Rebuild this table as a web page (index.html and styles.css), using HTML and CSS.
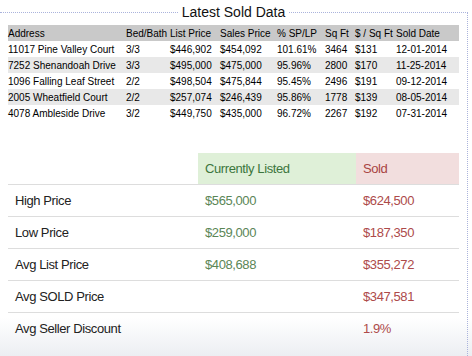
FILE: index.html
```html
<!DOCTYPE html>
<html>
<head>
<meta charset="utf-8">
<link rel="stylesheet" href="styles.css">
</head>
<body>
<fieldset class="panel">
  <legend class="panel-title">Latest Sold Data</legend>
  <table class="sold">
    <colgroup>
      <col class="c-addr"><col class="c-bb"><col class="c-lp"><col class="c-sp"><col class="c-pct"><col class="c-sq"><col class="c-psf"><col class="c-date">
    </colgroup>
    <thead>
      <tr><th>Address</th><th>Bed/Bath</th><th>List Price</th><th>Sales Price</th><th>% SP/LP</th><th>Sq Ft</th><th>$ / Sq Ft</th><th>Sold Date</th></tr>
    </thead>
    <tbody>
      <tr><td>11017 Pine Valley Court</td><td>3/3</td><td>$446,902</td><td>$454,092</td><td>101.61%</td><td>3464</td><td>$131</td><td>12-01-2014</td></tr>
      <tr><td>7252 Shenandoah Drive</td><td>3/3</td><td>$495,000</td><td>$475,000</td><td>95.96%</td><td>2800</td><td>$170</td><td>11-25-2014</td></tr>
      <tr><td>1096 Falling Leaf Street</td><td>2/2</td><td>$498,504</td><td>$475,844</td><td>95.45%</td><td>2496</td><td>$191</td><td>09-12-2014</td></tr>
      <tr><td>2005 Wheatfield Court</td><td>2/2</td><td>$257,074</td><td>$246,439</td><td>95.86%</td><td>1778</td><td>$139</td><td>08-05-2014</td></tr>
      <tr><td>4078 Ambleside Drive</td><td>3/2</td><td>$449,750</td><td>$435,000</td><td>96.72%</td><td>2267</td><td>$192</td><td>07-31-2014</td></tr>
    </tbody>
  </table>

  <table class="stats">
    <colgroup><col class="s-label"><col class="s-cur"><col class="s-sold"></colgroup>
    <thead>
      <tr><th></th><th class="h-cur">Currently Listed</th><th class="h-sold">Sold</th></tr>
    </thead>
    <tbody>
      <tr><td>High Price</td><td class="v-cur">$565,000</td><td class="v-sold">$624,500</td></tr>
      <tr><td>Low Price</td><td class="v-cur">$259,000</td><td class="v-sold">$187,350</td></tr>
      <tr><td>Avg List Price</td><td class="v-cur">$408,688</td><td class="v-sold">$355,272</td></tr>
      <tr><td>Avg SOLD Price</td><td class="v-cur"></td><td class="v-sold">$347,581</td></tr>
      <tr><td>Avg Seller Discount</td><td class="v-cur"></td><td class="v-sold">1.9%</td></tr>
    </tbody>
  </table>
</fieldset>
</body>
</html>
```

FILE: styles.css
```css
html, body {
  margin: 0;
  padding: 0;
}
body {
  width: 472px;
  height: 356px;
  overflow: hidden;
  font-family: "Liberation Sans", Arial, sans-serif;
  background: linear-gradient(to bottom, #ffffff 0, #ffffff 318px, #eceef2 356px);
}
.panel {
  box-sizing: border-box;
  margin: 4px 4px 0 0;
  padding: 4px 8px 0 8px;
  border: 1px dotted #aab3dc;
  border-left: none;
  border-bottom: none;
  min-width: 0;
  height: 352px;
}
.panel-title {
  margin: 0 auto;
  padding: 0 3px;
  font-size: 14px;
  line-height: 17px;
  color: #111;
}
.sold {
  width: 451px;
  table-layout: fixed;
  border-collapse: collapse;
  font-size: 10px;
  color: #000;
}
.sold th, .sold td {
  padding: 0;
  height: 16px;
  text-align: left;
  font-weight: normal;
  white-space: nowrap;
  vertical-align: middle;
}
.sold thead tr { background: #c9c9c9; }
.sold tbody tr:nth-child(even) { background: #e8e8e8; }
.c-addr { width: 118px; }
.c-bb { width: 44px; }
.c-lp { width: 50px; }
.c-sp { width: 57px; }
.c-pct { width: 48px; }
.c-sq { width: 30px; }
.c-psf { width: 41px; }
.c-date { width: 63px; }

.stats {
  margin-top: 32px;
  width: 451px;
  table-layout: fixed;
  border-collapse: collapse;
  font-size: 13px;
  letter-spacing: -0.4px;
  color: #222;
}
.s-label { width: 190px; }
.s-cur { width: 158px; }
.s-sold { width: 103px; }
.stats th, .stats td {
  padding: 0 7px;
  text-align: left;
  font-weight: normal;
  vertical-align: middle;
}
.stats th { height: 31px; }
.stats td {
  height: 31px;
  border-top: 1px solid #dddddd;
}
.h-cur { background: #dff0d8; color: #3c763d; }
.h-sold { background: #f2dede; color: #a94442; }
.v-cur { color: #5a8656; }
.v-sold { color: #ad4a4a; }
```
